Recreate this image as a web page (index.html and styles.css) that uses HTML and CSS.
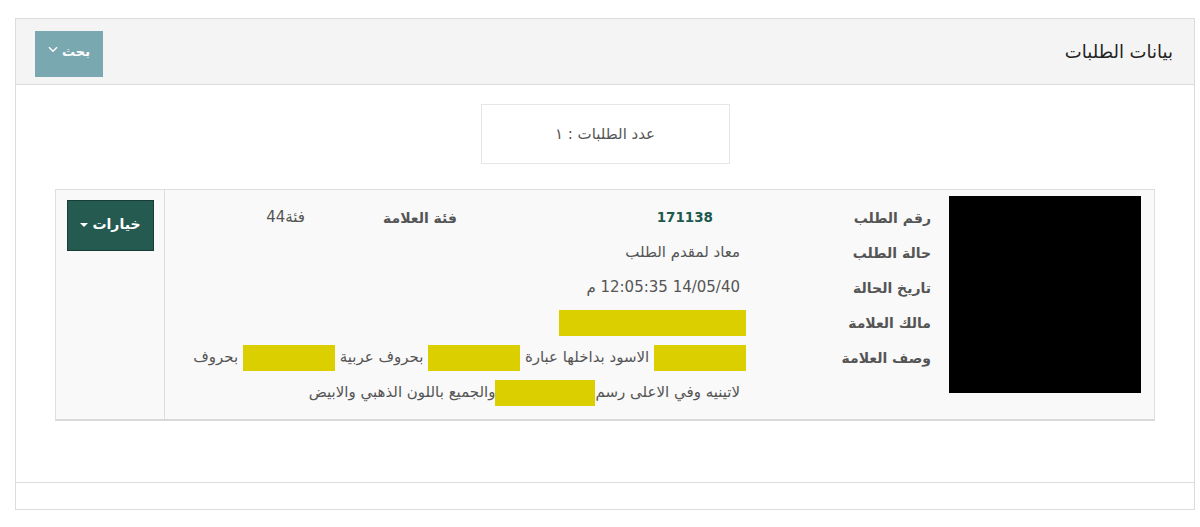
FILE: index.html
```html
<!DOCTYPE html>
<html lang="ar" dir="rtl">
<head>
<meta charset="utf-8">
<title>بيانات الطلبات</title>
<link rel="stylesheet" href="styles.css">
</head>
<body>
<div class="panel">
  <div class="panel-head">
    <h2 class="title">بيانات الطلبات</h2>
    <button class="search-btn" type="button">بحث
      <svg class="chev" width="10" height="7" viewBox="0 0 10 7"><path d="M1 1.2 L5 5.2 L9 1.2" fill="none" stroke="#fff" stroke-width="1.4"/></svg>
    </button>
  </div>
  <div class="panel-body">
    <div class="count-box">عدد الطلبات : ١</div>
    <div class="card">
      <div class="card-image"><div class="thumb"></div></div>
      <div class="card-details">
        <div class="lbl">رقم الطلب</div>
        <div class="val num">171138</div>
        <div class="lbl">فئة العلامة</div>
        <div class="val">فئة44</div>

        <div class="lbl">حالة الطلب</div>
        <div class="val wide">معاد لمقدم الطلب</div>

        <div class="lbl">تاريخ الحالة</div>
        <div class="val wide">14/05/40 12:05:35 م</div>

        <div class="lbl">مالك العلامة</div>
        <div class="val wide"><span class="mark bleed owner"></span></div>

        <div class="lbl">وصف العلامة</div>
        <div class="val wide desc"><span class="mark bleed m1"></span> الاسود بداخلها عبارة <span class="mark m2"></span> بحروف عربية <span class="mark m3"></span> بحروف<br>لاتينيه وفي الاعلى رسم<span class="mark m4"></span>والجميع باللون الذهبي والابيض</div>
      </div>
      <div class="card-actions">
        <button class="options-btn" type="button">خيارات <span class="caret"></span></button>
      </div>
    </div>
  </div>
  <div class="panel-foot"></div>
</div>
</body>
</html>
```
FILE: styles.css
```css
* { box-sizing: border-box; }
html, body { background: #fff; }
body {
  margin: 0;
  padding: 18px 5px 0 15px;
  font-family: "DejaVu Sans", "Noto Sans", sans-serif;
  color: #555;
}
.panel {
  border: 1px solid #dcdcdc;
  background: #fff;
}
.panel-head {
  height: 66px;
  background: #f4f4f4;
  border-bottom: 1px solid #dcdcdc;
  display: flex;
  align-items: center;
  justify-content: space-between;
  padding: 0 21px 0 19px;
}
.title {
  margin: 0;
  font-size: 18px;
  font-weight: normal;
  color: #222;
}
.search-btn {
  width: 68px;
  height: 46px;
  margin-top: 4px;
  border: 0;
  background: #7aa8b0;
  color: #fff;
  font-family: inherit;
  font-size: 13px;
  font-weight: bold;
  display: flex;
  align-items: center;
  justify-content: center;
  gap: 4px;
  padding: 0 0 4px 0;
}
.chev { margin-top: -4px; }
.panel-body {
  padding: 19px 39px 61px;
  border-bottom: 1px solid #dcdcdc;
}
.count-box {
  width: 249px;
  height: 60px;
  margin: 0 auto;
  border: 1px solid #e6e6e6;
  display: flex;
  align-items: center;
  justify-content: center;
  font-size: 15px;
  color: #555;
}
.card {
  margin-top: 25px;
  display: flex;
  background: #f9f9f9;
  border: 1px solid #dedede;
  border-bottom: 2px solid #d9d9d9;
}
.card-image {
  width: 214px;
  padding: 6px 13px 0 9px;
}
.thumb {
  width: 192px;
  height: 197px;
  background: #000;
}
.card-details {
  flex: 1;
  padding: 10px 9px 9px 0;
  display: grid;
  grid-template-columns: 191px 283px 152px 1fr;
  grid-auto-rows: 35px;
  align-items: center;
  font-size: 15px;
}
.lbl {
  font-weight: bold;
  color: #555;
  font-size: 14px;
}
.val { color: #555; line-height: 35px; }
.val.wide { grid-column: 2 / 5; }
.val.num {
  color: #1f5a4f;
  font-weight: bold;
  font-size: 13.5px;
  padding-right: 27px;
}
.val.desc {
  grid-row: span 2;
  align-self: start;
}
.mark {
  display: inline-block;
  background: #dccf00;
  height: 26px;
  vertical-align: middle;
}
.bleed { margin-right: -6px; }
.owner { width: 187px; }
.m1 { width: 92px; }
.m2 { width: 92px; }
.m3 { width: 92px; }
.m4 { width: 100px; }
.card-actions {
  width: 109px;
  border-right: 1px solid #dedede;
  display: flex;
  justify-content: center;
  padding-top: 10px;
}
.options-btn {
  width: 87px;
  height: 51px;
  background: #245a4f;
  border: 1px solid #173d35;
  color: #fff;
  font-family: inherit;
  font-size: 14px;
  font-weight: bold;
  display: flex;
  align-items: center;
  justify-content: center;
  gap: 5px;
  padding: 0 0 4px 0;
}
.caret {
  width: 0;
  height: 0;
  border-left: 4px solid transparent;
  border-right: 4px solid transparent;
  border-top: 4px solid #fff;
  margin-top: 3px;
}
.panel-foot { height: 26px; }
```
